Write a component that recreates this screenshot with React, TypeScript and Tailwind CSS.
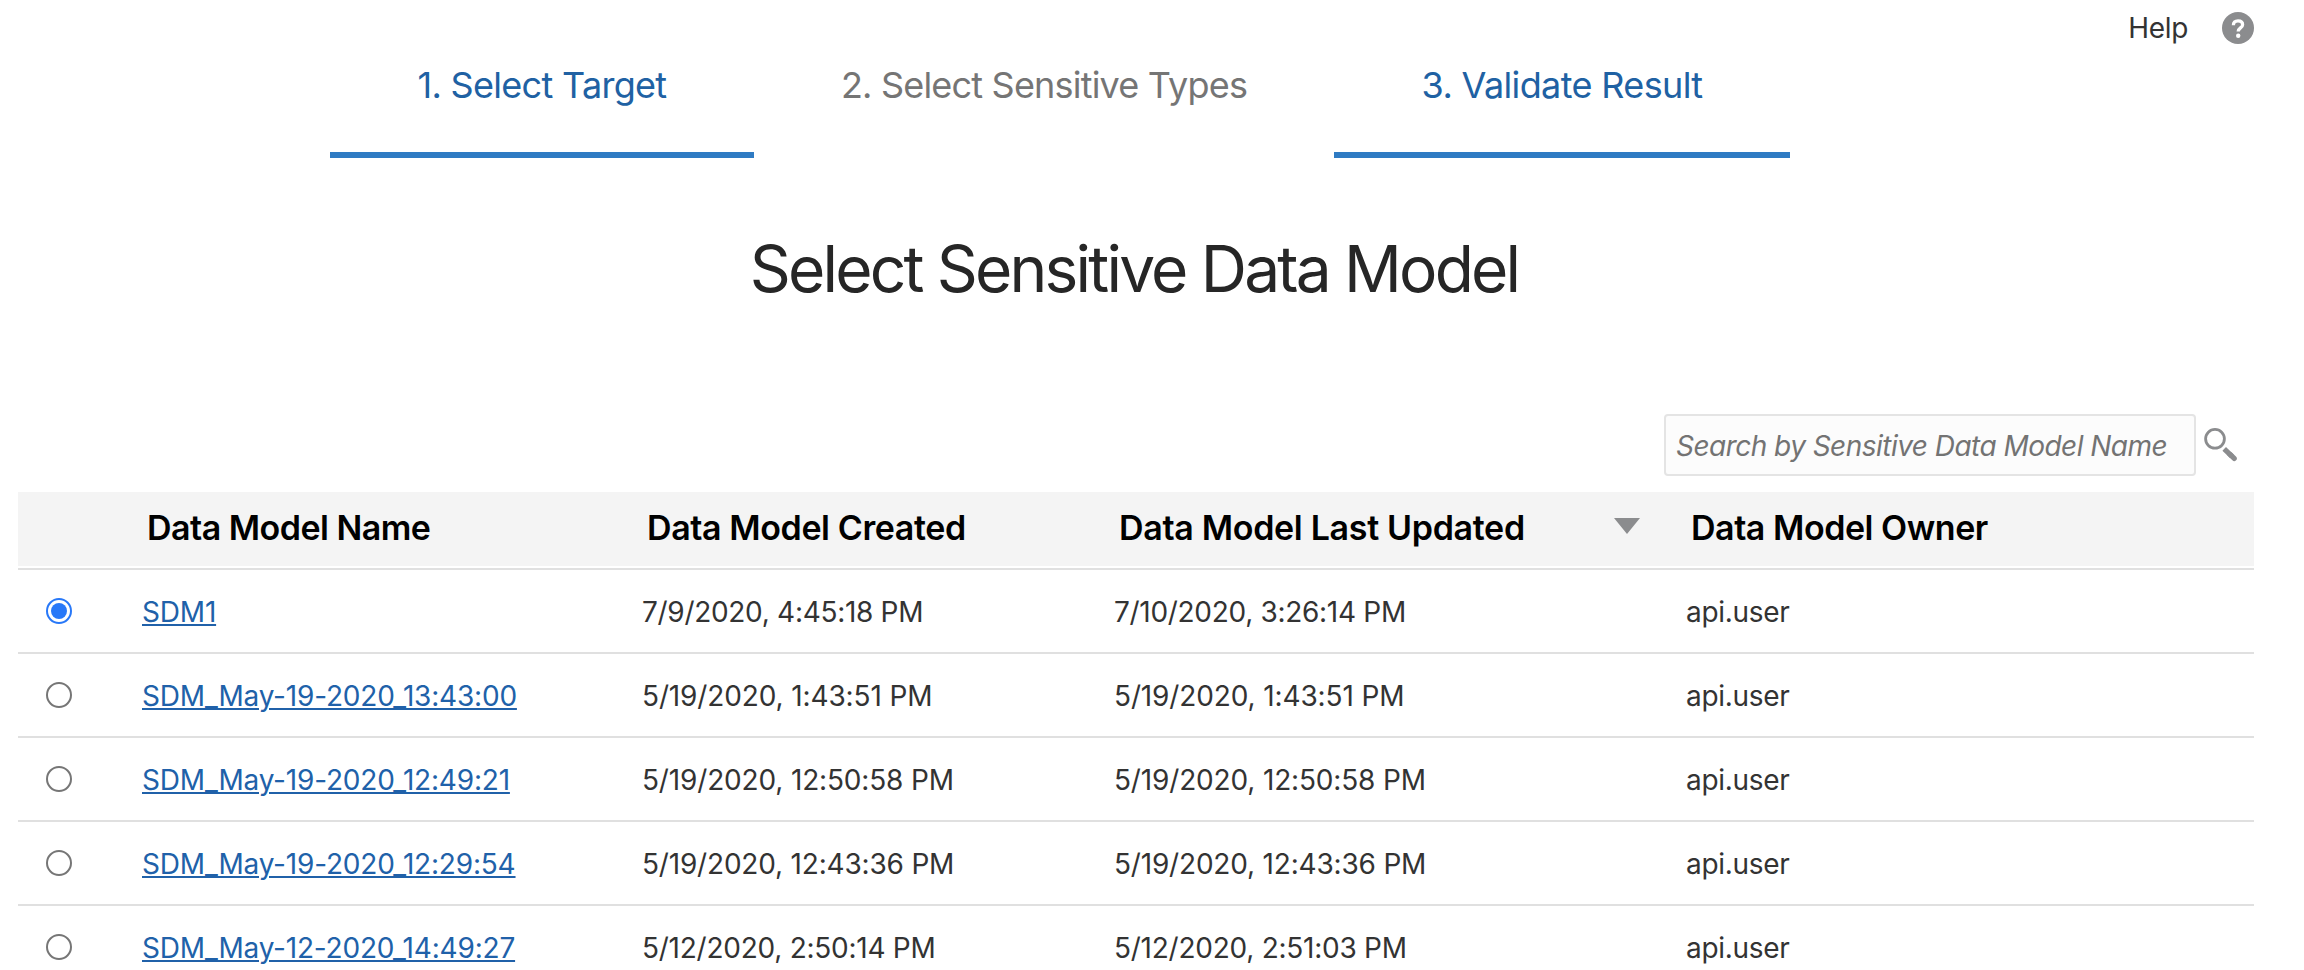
import React from "react";

const STEPS = [
  { label: "1. Select Target", box: "w-[424px] border-[#2f7bc3] text-[#2061a3]", text: "tracking-[-0.7px]" },
  { label: "2. Select Sensitive Types", box: "w-[580px] border-transparent text-[#757575]", text: "tracking-[-0.8px]" },
  { label: "3. Validate Result", box: "w-[456px] border-[#2f7bc3] text-[#2061a3]", text: "tracking-[-0.64px]" },
];

const ROWS = [
  { name: "SDM1", created: "7/9/2020, 4:45:18 PM", updated: "7/10/2020, 3:26:14 PM", date: "tracking-[-0.3px]", selected: true },
  { name: "SDM_May-19-2020_13:43:00", created: "5/19/2020, 1:43:51 PM", updated: "5/19/2020, 1:43:51 PM", date: "tracking-[-0.13px]" },
  { name: "SDM_May-19-2020_12:49:21", created: "5/19/2020, 12:50:58 PM", updated: "5/19/2020, 12:50:58 PM", date: "tracking-[-0.16px]" },
  { name: "SDM_May-19-2020_12:29:54", created: "5/19/2020, 12:43:36 PM", updated: "5/19/2020, 12:43:36 PM", date: "tracking-[-0.19px]" },
  { name: "SDM_May-12-2020_14:49:27", created: "5/12/2020, 2:50:14 PM", updated: "5/12/2020, 2:51:03 PM", date: "tracking-[-0.25px]" },
];

const COLUMNS = "grid grid-cols-[124px_500px_472px_572px_1fr]";

function Radio({ checked }: { checked?: boolean }) {
  return (
    <span
      role="radio"
      aria-checked={!!checked}
      className={
        checked
          ? "ml-7 mt-[3px] flex size-[26px] items-center justify-center rounded-full border-2 border-[#2878f8]"
          : "ml-7 mt-[3px] flex size-[26px] items-center justify-center rounded-full border-2 border-[#767676]"
      }
    >
      {checked && <span className="size-4 rounded-full bg-[#2878f8]" />}
    </span>
  );
}

export default function App() {
  return (
    <div className="h-[970px] w-[2304px] overflow-hidden bg-white font-['Inter',sans-serif] text-[28px] leading-[34px] text-[#333]">
      <header className="flex h-[158px] justify-between">
        <nav className="flex pl-[330px]">
          {STEPS.map((s) => (
            <div key={s.label} className={`flex justify-center border-b-[6px] pt-[63px] text-[36px] leading-[44px] ${s.box}`}>
              <span className={`whitespace-nowrap ${s.text}`}>{s.label}</span>
            </div>
          ))}
        </nav>
        <div className="flex gap-[34px] pr-[50px] pt-3">
          <span className="mt-[-1px] tracking-[-0.3px]">Help</span>
          <svg className="size-8" viewBox="0 0 32 32" fill="none">
            <circle cx="16" cy="16" r="16" fill="#8b8c8e" />
            <path d="M11.4 13.2C11.3 10.5 13 8.8 16 8.8c2.8 0 4.6 1.5 4.6 3.9 0 3.3-4.4 3.2-4.4 6.8" stroke="#fff" strokeWidth="3.3" />
            <circle cx="16.2" cy="23.7" r="2.2" fill="#fff" />
          </svg>
        </div>
      </header>

      <h1 className="pt-[72px] pr-[36px] text-center text-[64px] leading-[77px] tracking-[-2.8px] text-[#262626]">Select Sensitive Data Model</h1>

      <div className="mt-[107px] flex h-[62px] items-center justify-end pr-[66px]">
        <div className="flex h-[62px] w-[532px] items-center rounded-[4px] border-2 border-[#e4e4e4] bg-[#fcfcfc] pl-[10px] pt-[2px]">
          <span className="whitespace-nowrap italic tracking-[-0.53px] text-[#737373]">Search by Sensitive Data Model Name</span>
        </div>
        <svg className="ml-2 size-[34px]" viewBox="0 0 34 34" fill="none">
          <circle cx="11" cy="10.8" r="9.4" stroke="#8b8c8e" strokeWidth="2.8" />
          <path d="M20.2 20.9 28 28.3" stroke="#8b8c8e" strokeWidth="5.2" />
          <path d="M26 26.4 30.2 30.4" stroke="#8b8c8e" strokeWidth="5.2" strokeLinecap="round" />
        </svg>
      </div>

      <section className="ml-[18px] mr-[50px] mt-4">
        <div className={`${COLUMNS} h-[74px] bg-[#f4f4f4] pt-[15px] text-[34px] leading-[41px] font-semibold text-black`}>
          <span />
          <span className="pl-[5px] tracking-[-0.52px]">Data Model Name</span>
          <span className="pl-[5px] tracking-[-0.4px]">Data Model Created</span>
          <span className="flex justify-between pl-[5px] pr-[46px] tracking-[-0.32px]">
            Data Model Last Updated
            <svg className="mt-[11px] h-[16px] w-[26px]" viewBox="0 0 26 16"><path d="M0 0h26L13 16z" fill="#8b8c8e" /></svg>
          </span>
          <span className="pl-[5px] tracking-[-0.46px]">Data Model Owner</span>
        </div>
        <div className="h-[2px]" />
        {ROWS.map((r) => (
          <div key={r.name} className={`${COLUMNS} h-[84px] border-t-2 border-[#e0e0e0] pt-[25px]`}>
            <Radio checked={r.selected} />
            <span><a className="text-[#2061a9] underline decoration-2 underline-offset-2 tracking-[-0.19px]">{r.name}</a></span>
            <span className={r.date}>{r.created}</span>
            <span className={r.date}>{r.updated}</span>
            <span className="tracking-[-0.3px]">api.user</span>
          </div>
        ))}
      </section>
    </div>
  );
}
